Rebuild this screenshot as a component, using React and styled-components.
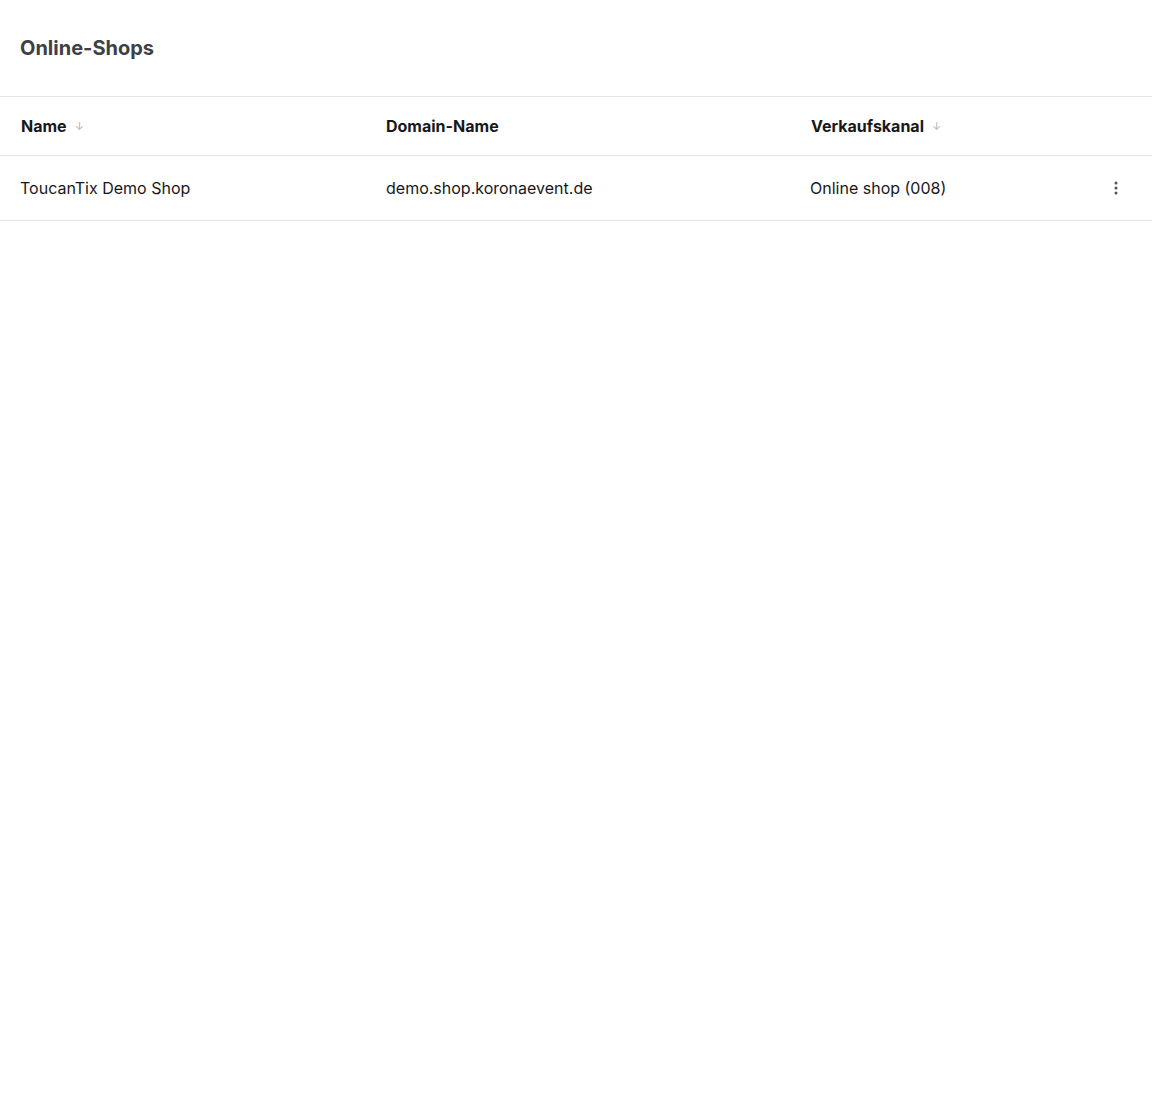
import styled, { createGlobalStyle } from "styled-components";

const GlobalStyle = createGlobalStyle`
  body {
    margin: 0;
    background: #ffffff;
    font-family: Inter, "Noto Sans", sans-serif;
    color: #18181b;
  }
`;

const Page = styled.div`
  width: 1152px;
`;

const TitleBar = styled.div`
  height: 96px;
  display: flex;
  align-items: center;
  padding: 0 20px;
  border-bottom: 1px solid #e4e4e7;
`;

const Title = styled.h1`
  margin: 0;
  font-size: 20px;
  font-weight: 700;
  color: #3f3f46;
`;

const Table = styled.table`
  width: 100%;
  border-collapse: collapse;
  table-layout: fixed;
`;

const HeadCell = styled.th`
  width: ${(p) => p.$width || "auto"};
  height: 58px;
  padding: 0 0 0 21px;
  text-align: left;
  font-size: 16px;
  font-weight: 700;
  color: #18181b;
  border-bottom: 1px solid #e4e4e7;
`;

const SortArrow = styled.span`
  margin-left: 8px;
  font-size: 11px;
  font-weight: 400;
  color: #b4b4bb;
  position: relative;
  top: -2px;
`;

const Cell = styled.td`
  height: 64px;
  padding: 0 0 0 ${(p) => p.$pad || "20px"};
  font-size: 16px;
  color: #18181b;
  border-bottom: 1px solid #e4e4e7;
`;

const ActionCell = styled(Cell)`
  padding: 0 29px 0 0;
  text-align: right;
`;

const MenuButton = styled.button`
  border: none;
  background: none;
  padding: 4px;
  display: inline-flex;
  align-items: center;
  justify-content: center;
  cursor: pointer;
  color: #52525b;
`;

const Kebab = () => (
  <svg width="6" height="16" viewBox="0 0 6 16" fill="currentColor">
    <circle cx="3" cy="3" r="1.5" />
    <circle cx="3" cy="8" r="1.5" />
    <circle cx="3" cy="13" r="1.5" />
  </svg>
);

const shops = [
  {
    name: "ToucanTix Demo Shop",
    domain: "demo.shop.koronaevent.de",
    channel: "Online shop (008)",
  },
];

const App = () => {
  return (
    <Page>
      <GlobalStyle />
      <TitleBar>
        <Title>Online-Shops</Title>
      </TitleBar>
      <Table>
        <thead>
          <tr>
            <HeadCell $width="344px">
              Name<SortArrow>↓</SortArrow>
            </HeadCell>
            <HeadCell $width="404px">Domain-Name</HeadCell>
            <HeadCell>
              Verkaufskanal<SortArrow>↓</SortArrow>
            </HeadCell>
            <HeadCell $width="59px" />
          </tr>
        </thead>
        <tbody>
          {shops.map((shop) => (
            <tr key={shop.name}>
              <Cell>{shop.name}</Cell>
              <Cell $pad="21px">{shop.domain}</Cell>
              <Cell>{shop.channel}</Cell>
              <ActionCell>
                <MenuButton aria-label="Aktionen">
                  <Kebab />
                </MenuButton>
              </ActionCell>
            </tr>
          ))}
        </tbody>
      </Table>
    </Page>
  );
};

export default App;
